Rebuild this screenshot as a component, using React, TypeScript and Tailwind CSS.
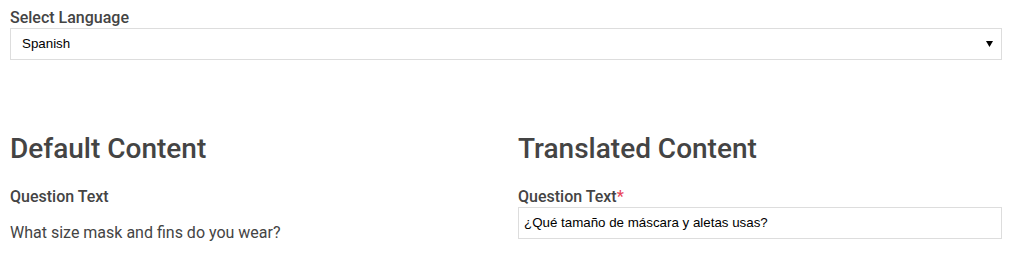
export default function App() {
  return (
    <div className="w-[1014px] h-[264px] bg-white pl-[10px] pr-[12px] pt-[8px] text-[#444] font-['Roboto',sans-serif]">
      <div className="flex flex-col">
        <label className="text-[16px] leading-[20px] font-medium">Select Language</label>
        <div className="h-[32px] border border-[#ddd] flex items-center justify-between px-[11px] font-['Liberation_Sans',Arial,sans-serif] text-[13.33px] text-black">
          <span>Spanish</span>
          <svg width="7" height="6" viewBox="0 0 7 6" className="mr-[-3px]">
            <path d="M0 0 H7 L3.5 6 Z" fill="#000" />
          </svg>
        </div>
      </div>
      <div className="grid grid-cols-2 gap-6 mt-[72px]">
        <div>
          <h2 className="text-[28px] leading-[34px] font-medium">Default Content</h2>
          <div className="mt-[21px] text-[16px] leading-[20px] font-medium">Question Text</div>
          <p className="mt-[16px] text-[16px] leading-[20px]">What size mask and fins do you wear?</p>
        </div>
        <div>
          <h2 className="text-[28px] leading-[34px] font-medium">Translated Content</h2>
          <div className="mt-[21px] text-[16px] leading-[20px] font-medium">
            Question Text<span className="text-[#e8475b]">*</span>
          </div>
          <div className="h-[32px] border border-[#ddd] flex items-center px-[5px] font-['Liberation_Sans',Arial,sans-serif] text-[13.33px] text-black">
            ¿Qué tamaño de máscara y aletas usas?
          </div>
        </div>
      </div>
    </div>
  );
}
